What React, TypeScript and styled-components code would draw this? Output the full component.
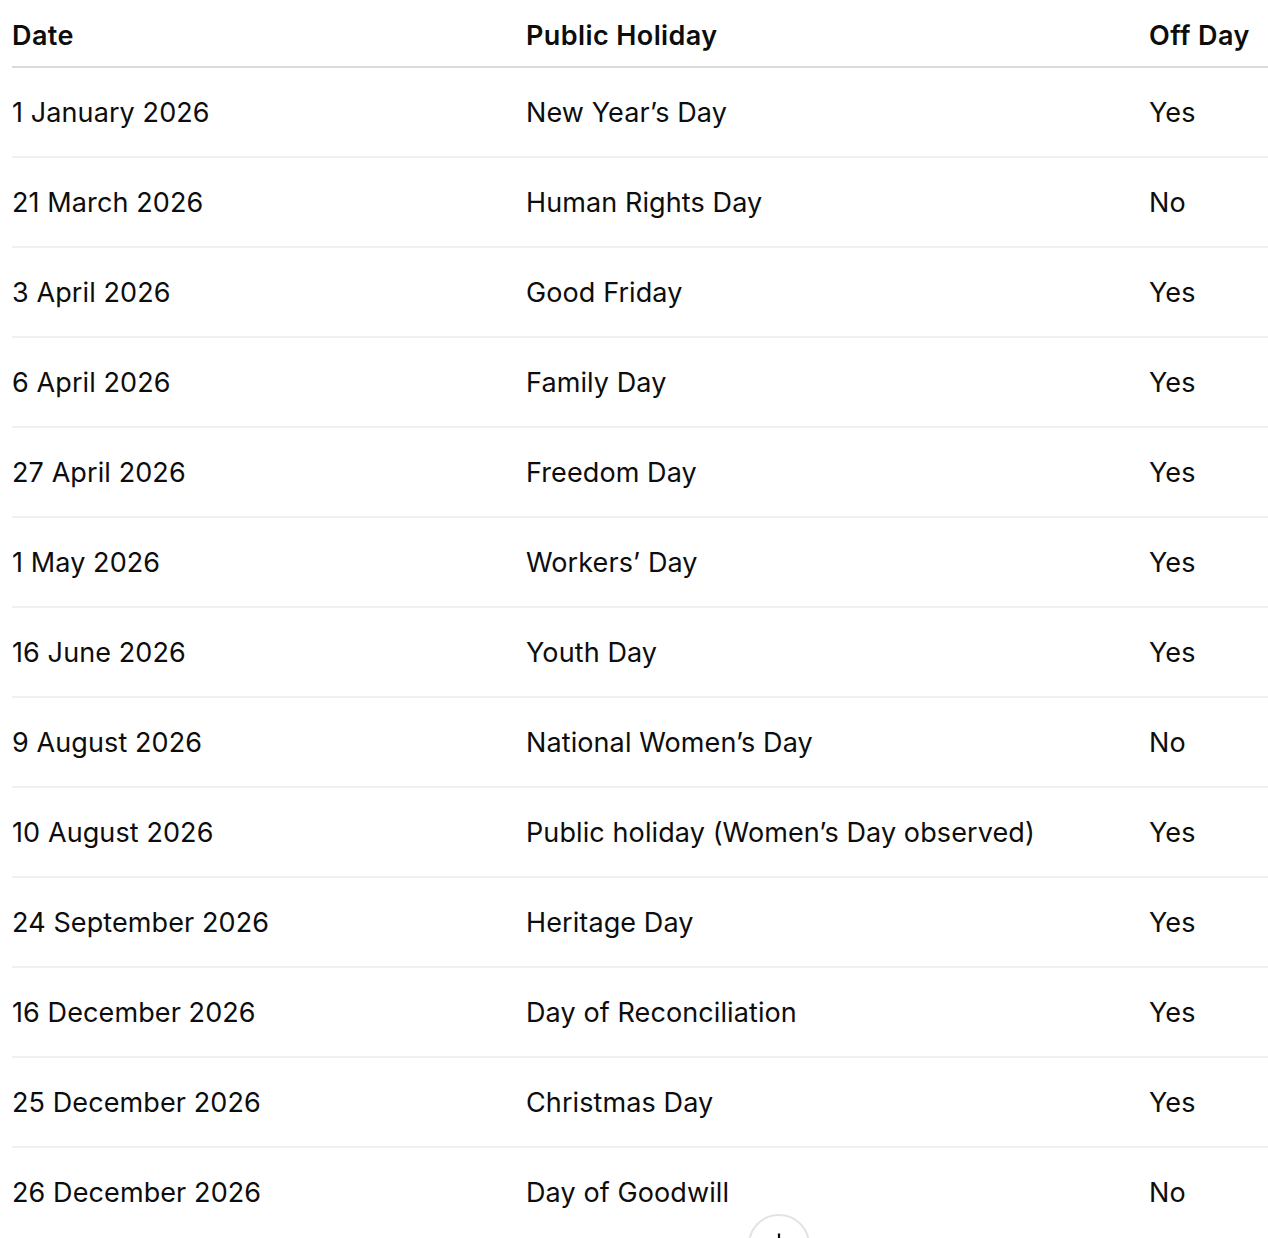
import React from 'react'
import styled, { createGlobalStyle } from 'styled-components'

const holidays = [
    { date: '1 January 2026', name: 'New Year’s Day', off: 'Yes' },
    { date: '21 March 2026', name: 'Human Rights Day', off: 'No' },
    { date: '3 April 2026', name: 'Good Friday', off: 'Yes' },
    { date: '6 April 2026', name: 'Family Day', off: 'Yes' },
    { date: '27 April 2026', name: 'Freedom Day', off: 'Yes' },
    { date: '1 May 2026', name: 'Workers’ Day', off: 'Yes' },
    { date: '16 June 2026', name: 'Youth Day', off: 'Yes' },
    { date: '9 August 2026', name: 'National Women’s Day', off: 'No' },
    { date: '10 August 2026', name: 'Public holiday (Women’s Day observed)', off: 'Yes' },
    { date: '24 September 2026', name: 'Heritage Day', off: 'Yes' },
    { date: '16 December 2026', name: 'Day of Reconciliation', off: 'Yes' },
    { date: '25 December 2026', name: 'Christmas Day', off: 'Yes' },
    { date: '26 December 2026', name: 'Day of Goodwill', off: 'No' },
]

const App: React.FC = () => {
    return (
        <Page>
            <GlobalStyle />
            <Table>
                <colgroup>
                    <col style={{ width: 514 }} />
                    <col style={{ width: 623 }} />
                    <col />
                </colgroup>
                <thead>
                    <HeadRow>
                        <Th>Date</Th>
                        <Th>Public Holiday</Th>
                        <Th>Off Day</Th>
                    </HeadRow>
                </thead>
                <tbody>
                    {holidays.map((h, index) => (
                        <Row key={index} last={index === holidays.length - 1}>
                            <Td>{h.date}</Td>
                            <Td>{h.name}</Td>
                            <Td>{h.off}</Td>
                        </Row>
                    ))}
                </tbody>
            </Table>
            <ScrollButton aria-label="Scroll down">
                <svg width="26" height="26" viewBox="0 0 24 24" fill="none" stroke="currentColor" strokeWidth="2" strokeLinecap="round" strokeLinejoin="round">
                    <path d="M12 4v16" />
                    <path d="M6 14l6 6 6-6" />
                </svg>
            </ScrollButton>
        </Page>
    )
}

export default App

const GlobalStyle = createGlobalStyle`
    html, body {
        margin: 0;
        padding: 0;
        background: #fff;
        overflow: hidden;
    }
    body {
        font-family: Inter, "Noto Sans", "Liberation Sans", sans-serif;
        color: #0d0d0d;
    }
`

const Page = styled.div`
    position: relative;
    height: 1238px;
    overflow: hidden;
    padding-left: 12px;
`

const Table = styled.table`
    width: 1256px;
    border-collapse: collapse;
    table-layout: fixed;
    font-size: 27px;
`

const HeadRow = styled.tr`
    height: 67px;
    border-bottom: 2px solid #dadada;
`

const Th = styled.th`
    text-align: left;
    font-weight: 600;
    letter-spacing: 0.4px;
    padding: 4px 0 0 0;
    vertical-align: middle;
`

const Row = styled.tr<{ last?: boolean }>`
    height: 90px;
    border-bottom: ${props => props.last ? 'none' : '2px solid #f0f0f0'};
`

const Td = styled.td`
    padding: 0;
    vertical-align: middle;
    font-weight: 400;
    letter-spacing: 0.1px;
`

const ScrollButton = styled.button`
    position: absolute;
    left: 748px;
    top: 1214px;
    width: 62px;
    height: 62px;
    border-radius: 50%;
    background: #fff;
    border: 2px solid #e3e3e3;
    color: #0d0d0d;
    display: flex;
    align-items: flex-start;
    justify-content: center;
    padding-top: 14px;
    box-sizing: border-box;
    cursor: pointer;
`
